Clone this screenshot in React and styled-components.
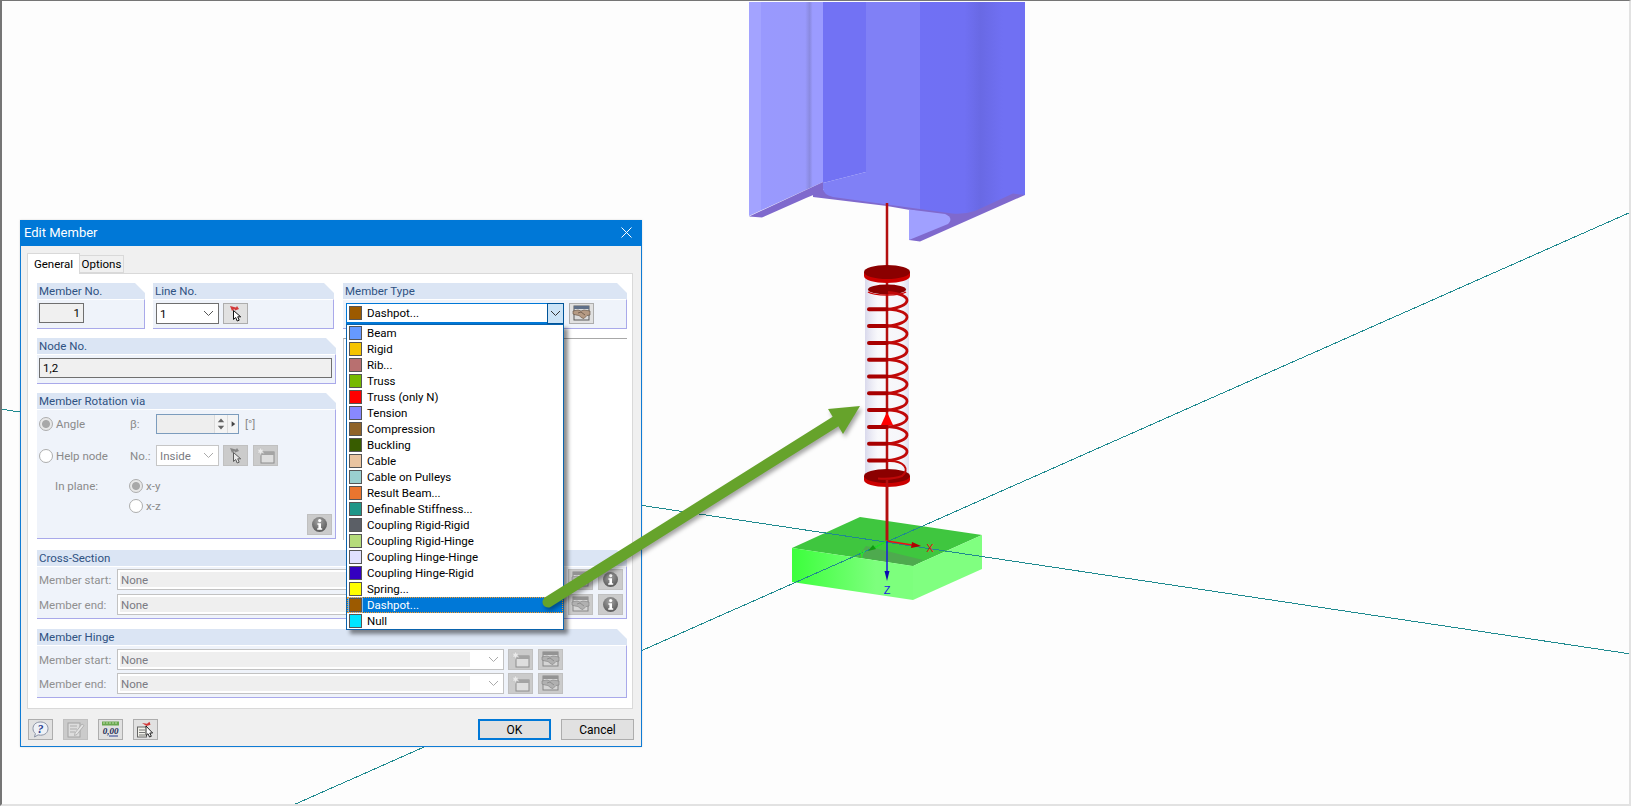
import React from "react";
import styled, { createGlobalStyle } from "styled-components";

const Global = createGlobalStyle`
  html, body { margin: 0; padding: 0; background: #fdfdfd; overflow: hidden; }
  * { box-sizing: border-box; }
`;

const Frame = styled.div`
  position: relative;
  width: 1631px;
  height: 806px;
  overflow: hidden;
  background: #fdfdfd;
  border-top: 1px solid #757575;
  border-left: 2px solid #757575;
  border-right: 2px solid #e2e2e2;
  border-bottom: 2px solid #e2e2e2;
  font-family: Roboto, "Liberation Sans", sans-serif;
  font-size: 11.5px;
  color: #000;
`;

const SceneSvg = styled.svg`
  position: absolute;
  left: -2px;
  top: -1px;
  width: 1631px;
  height: 806px;
`;

const ArrowSvg = styled.svg`
  position: absolute;
  left: -2px;
  top: -1px;
  width: 1631px;
  height: 806px;
  pointer-events: none;
  z-index: 5;
  filter: drop-shadow(2px 3px 2px rgba(0, 0, 0, 0.35));
`;

const Dialog = styled.div`
  position: absolute;
  left: 18px;
  top: 219px;
  width: 622px;
  height: 527px;
  background: #f0f0f0;
  border: 1px solid #0f7bd4;
  border-top: 0;
  display: flex;
  flex-direction: column;
  box-shadow: 0 0 2px rgba(0, 0, 0, 0.15);
`;

const TitleBar = styled.div`
  height: 26px;
  background: #0078d7;
  color: #fff;
  display: flex;
  align-items: center;
  justify-content: space-between;
  padding: 0 10px 2px 4px;
  font-size: 13px;
  margin: 0 -1px;
`;

const Body = styled.div`
  flex: 1;
  padding: 7px 8px 0 6px;
  display: flex;
  flex-direction: column;
`;

const Tabs = styled.div`
  display: flex;
  align-items: flex-end;
  height: 20px;
  position: relative;
  z-index: 1;
`;

const Tab = styled.div`
  height: ${(p) => (p.$active ? "21px" : "18px")};
  width: ${(p) => (p.$active ? "53px" : "44px")};
  background: ${(p) => (p.$active ? "#fff" : "#f0f0f0")};
  border: 1px solid #d9d9d9;
  border-bottom: ${(p) => (p.$active ? "0" : "1px solid #d9d9d9")};
  border-left: ${(p) => (p.$active ? "1px solid #d9d9d9" : "0")};
  margin-bottom: ${(p) => (p.$active ? "-1px" : "0")};
  display: flex;
  align-items: center;
  justify-content: center;
`;

const Panel = styled.div`
  height: 436px;
  background: #fff;
  border: 1px solid #d9d9d9;
  padding: 9px 5px 0 9px;
  display: flex;
  flex-direction: column;
  gap: 10px;
`;

const Columns = styled.div`
  display: flex;
  gap: 7px;
  height: 257px;
`;

const LeftCol = styled.div`
  width: 299px;
  display: flex;
  flex-direction: column;
  gap: 9px;
`;

const RightCol = styled.div`
  width: 284px;
  display: flex;
  flex-direction: column;
  gap: 9px;
`;

const TopRow = styled.div`
  display: flex;
  gap: 8px;
`;

const Group = styled.section`
  width: ${(p) => p.$w || "auto"};
  display: flex;
  flex-direction: column;
`;

const GroupHead = styled.h3`
  margin: 0;
  height: 16px;
  line-height: 17px;
  padding-left: 2px;
  font-size: 11.5px;
  font-weight: 400;
  color: #2f5282;
  background: #dbe5f4;
  clip-path: polygon(0 0, calc(100% - 10px) 0, 100% 10px, 100% 100%, 0 100%);
`;

const GroupBody = styled.div`
  background: #eff3fa;
  border-top: 1px solid #fff;
  border-right: 1px solid #a9a9ea;
  border-bottom: 1px solid #a9a9ea;
  padding: ${(p) => p.$pad || "3px 3px 3px 2px"};
  display: flex;
  flex-direction: column;
  gap: ${(p) => p.$gap || "0"};
`;

const Inline = styled.div`
  display: flex;
  align-items: center;
  gap: ${(p) => p.$gap || "4px"};
`;

const ReadOnly = styled.div`
  width: ${(p) => p.$w};
  height: 20px;
  border: 1px solid #6f6f6f;
  background: #f0f0f0;
  padding: 0 3px;
  line-height: 18px;
  text-align: ${(p) => p.$align || "left"};
`;

const Combo = styled.div`
  position: relative;
  width: ${(p) => p.$w};
  height: 21px;
  background: #fff;
  border: 1px solid ${(p) => p.$line || "#6f6f6f"};
  color: ${(p) => (p.$muted ? "#7a7a82" : "#000")};
  padding-left: 3px;
  display: flex;
  align-items: center;
  justify-content: space-between;
`;

const DisabledFill = styled.div`
  flex: 1;
  align-self: stretch;
  margin: 2px 18px 2px -1px;
  padding-left: 1px;
  background: #efefef;
  display: flex;
  align-items: center;
`;

const Chevron = styled.svg`
  width: 11px;
  height: 7px;
  margin-right: 4px;
  flex: none;
  stroke: ${(p) => p.$c || "#555"};
  fill: none;
  stroke-width: 1;
`;

const IconBtn = styled.button`
  width: 25px;
  height: 21px;
  padding: 0;
  flex: none;
  background: ${(p) => (p.$off ? "#cbcbcb" : "#e1e1e1")};
  border: 1px solid ${(p) => (p.$off ? "#c0c0c0" : "#adadad")};
  display: flex;
  align-items: center;
  justify-content: center;
  svg {
    width: 19px;
    height: 17px;
    ${(p) => (p.$off ? (p.$solid ? "filter: grayscale(1);" : "filter: grayscale(1) opacity(0.6);") : "")}
  }
`;

const TypeCombo = styled.div`
  position: relative;
  width: 218px;
  height: 21px;
  background: #fff;
  border: 1px solid #0078d7;
  border-bottom-width: 2px;
  display: flex;
  align-items: center;
`;

const TypeArrow = styled.div`
  position: absolute;
  right: -1px;
  top: -1px;
  bottom: -2px;
  width: 17px;
  background: #cce4f7;
  border: 1px solid #005499;
  display: flex;
  align-items: center;
  justify-content: center;
  svg {
    margin: 0;
  }
`;

const Swatch = styled.i`
  display: block;
  width: 13px;
  height: 14px;
  flex: none;
  background: ${(p) => p.$color};
  border: 1px solid #555;
  outline: 1px solid rgba(255, 255, 255, 0.5);
`;

const ComboValue = styled.div`
  display: flex;
  align-items: center;
  gap: 5px;
  padding-left: 2px;
`;

const DropList = styled.ul`
  position: absolute;
  left: -1px;
  top: 20px;
  width: 218px;
  margin: 0;
  padding: 0;
  list-style: none;
  background: #fff;
  border: 1px solid #0a63ad;
  box-shadow: 4px 4px 4px rgba(0, 0, 0, 0.45);
  z-index: 3;
`;

const DropItem = styled.li`
  height: 16px;
  display: flex;
  align-items: center;
  gap: 5px;
  padding-left: 2px;
  background: ${(p) => (p.$active ? "#0078d7" : "transparent")};
  color: ${(p) => (p.$active ? "#fff" : "#000")};
  outline: ${(p) => (p.$active ? "1px dotted #ff9a1f" : "0")};
  outline-offset: -1px;
`;

const Preview = styled.div`
  flex: 1;
  border-top: 1px solid #a8a8a8;
  border-left: 1px solid #c8c8c8;
`;

const RotRow = styled.div`
  display: flex;
  align-items: center;
  color: #8a8a8a;
  height: ${(p) => p.$h};
  margin-top: ${(p) => p.$mt || "0"};
  padding-left: ${(p) => p.$pl || "0"};
`;

const RadioLabel = styled.label`
  width: ${(p) => p.$w};
  display: flex;
  align-items: center;
  gap: 3px;
  flex: none;
`;

const RadioDot = styled.span`
  width: 14px;
  height: 14px;
  border-radius: 50%;
  border: 1px solid #adadad;
  background: ${(p) => (p.$on ? "radial-gradient(circle, #a8a8a8 0 3.5px, #e8e8e8 4.5px)" : "#fff")};
  flex: none;
`;

const SmallLabel = styled.span`
  width: ${(p) => p.$w};
  flex: none;
  margin-left: ${(p) => p.$ml || "0"};
`;

const SpinBox = styled.div`
  width: 83px;
  height: 20px;
  background: #eeeeee;
  border: 1px solid #7c9cbd;
  display: flex;
  justify-content: flex-end;
`;

const SpinPart = styled.div`
  width: ${(p) => p.$w};
  background: #f4f4f4;
  border-left: 1px solid #dcdcdc;
  svg {
    display: block;
    width: 100%;
    height: 100%;
  }
`;

const InfoSlot = styled.div`
  display: flex;
  justify-content: flex-end;
`;

const FieldRow = styled.div`
  display: flex;
  align-items: center;
  height: 21px;
  color: #909090;
`;

const FieldLabel = styled.span`
  width: 78px;
  flex: none;
`;

const FieldBtns = styled.div`
  display: flex;
  gap: 5px;
  margin-left: 4px;
`;

const Footer = styled.div`
  flex: 1;
  display: flex;
  justify-content: space-between;
  align-items: flex-start;
  padding: 10px 0 0 1px;
  margin-right: -1px;
`;

const FooterGroup = styled.div`
  display: flex;
  gap: ${(p) => p.$gap};
`;

const TextBtn = styled.button`
  width: 73px;
  height: 21px;
  padding: 0;
  font: inherit;
  font-size: 12px;
  color: #000;
  background: #e1e1e1;
  border: ${(p) => (p.$primary ? "2px solid #0078d7" : "1px solid #adadad")};
`;

const CursorPick = () => (
  <svg viewBox="0 0 19 17">
    <path d="M4 1l6 1.5 1-1.5 2 3-4 1.5-.6-1.4L6 6z" fill="#d23a3a" />
    <path d="M7.5 5.5v9l2.2-2 1.5 3.5 2-.8-1.5-3.4h3z" fill="#fff" stroke="#111" strokeWidth="1" strokeLinejoin="round" />
  </svg>
);

const NewWindow = () => (
  <svg viewBox="0 0 19 17">
    <rect x="5" y="5" width="13" height="11" fill="#ececdc" stroke="#666" />
    <rect x="5" y="5" width="13" height="3" fill="#8c8c7a" />
    <path d="M4.5 0l1 2.6 2.6-.6-1.6 2.2 1.6 2.2-2.6-.6-1 2.6-1-2.6-2.6.6 1.6-2.2L.9 2l2.6.6z" fill="#fff" stroke="#b5b5b5" strokeWidth="0.5" />
  </svg>
);

const HandshakeWindow = () => (
  <svg viewBox="0 0 19 17">
    <rect x="2" y="1" width="15" height="14" fill="#dcdcdc" stroke="#5a5a5a" />
    <rect x="2" y="1" width="15" height="3" fill="#5f6f88" />
    <path d="M1 6l5-1 3 1 3-1 6 1v4l-3 .5-3 3-2-.5-3-2.500-3-.5-3-1z" fill="#b59a83" stroke="#5d4b3c" strokeWidth="0.6" />
    <path d="M6 8l3-1 4 3" fill="none" stroke="#5d4b3c" strokeWidth="0.7" />
  </svg>
);

const InfoCircle = () => (
  <svg viewBox="0 0 19 17">
    <defs>
      <radialGradient id="inf" cx="45%" cy="30%" r="75%">
        <stop offset="0" stopColor="#a5a59c" />
        <stop offset="1" stopColor="#55554f" />
      </radialGradient>
    </defs>
    <circle cx="9.5" cy="8.5" r="7.5" fill="url(#inf)" />
    <circle cx="9.7" cy="4.6" r="1.6" fill="#fff" />
    <path d="M7.4 7.2h3.6v5h1.2v1.6H7.2v-1.6h1.2V8.8h-1z" fill="#fff" />
  </svg>
);

const HelpBubble = () => (
  <svg viewBox="0 0 19 17">
    <path d="M9.5 1C14 1 17 3.7 17 7.6s-3 6.6-7.5 6.6c-.9 0-1.7-.1-2.4-.3L3.5 16l.9-3.5C2.8 11.3 2 9.6 2 7.6 2 3.7 5 1 9.5 1z" fill="#eef1f6" stroke="#8b93a5" />
    <text x="9.5" y="12" fontFamily="Liberation Serif, serif" fontWeight="700" fontStyle="italic" fontSize="12" textAnchor="middle" fill="#2a3f92">?</text>
  </svg>
);

const NoteEdit = () => (
  <svg viewBox="0 0 19 17">
    <rect x="2" y="2" width="12" height="14" fill="#e9e9de" stroke="#888" />
    <path d="M4 5h7M4 8h7M4 11h5" stroke="#999" />
    <path d="M9 12l7-9 2 1.5-7 9-2.5 1z" fill="#f3f3e8" stroke="#888" strokeWidth="0.7" />
  </svg>
);

const CalcZero = () => (
  <svg viewBox="0 0 19 17">
    <rect x="1" y="0.5" width="17" height="4" fill="#6aa84f" />
    <path d="M3 1v2M6 1v2M9 1v2M12 1v2M15 1v2" stroke="#d5ecc5" strokeWidth="0.8" />
    <text x="9.5" y="12.5" fontFamily="Liberation Serif, serif" fontStyle="italic" fontWeight="700" fontSize="9" textAnchor="middle" fill="#1b2a55">0,00</text>
    <path d="M8 15h9" stroke="#2a3f92" />
  </svg>
);

const ListPick = () => (
  <svg viewBox="0 0 19 17">
    <rect x="1.5" y="6" width="9" height="10" fill="#f2f2ea" stroke="#666" />
    <path d="M3 9h6M3 11.5h6M3 14h6" stroke="#777" />
    <path d="M6 2l5 .8 2.5-2 1 3-4 1.2z" fill="#d23a3a" />
    <path d="M10 5v9.5l2-1.8 1.5 3.3 1.8-.7-1.5-3.3h2.8z" fill="#fff" stroke="#111" strokeWidth="0.9" strokeLinejoin="round" />
  </svg>
);

const ChevronDown = ({ c }) => (
  <Chevron viewBox="0 0 11 7" $c={c}>
    <path d="M1 1l4.5 4.5L10 1" />
  </Chevron>
);

const memberTypes = [
  ["Beam", "#6699ff"],
  ["Rigid", "#f5c400"],
  ["Rib...", "#b87070"],
  ["Truss", "#76b900"],
  ["Truss (only N)", "#ff0000"],
  ["Tension", "#8888ff"],
  ["Compression", "#8f6328"],
  ["Buckling", "#385c00"],
  ["Cable", "#e9c4a0"],
  ["Cable on Pulleys", "#9acfcf"],
  ["Result Beam...", "#e9752f"],
  ["Definable Stiffness...", "#1f9688"],
  ["Coupling Rigid-Rigid", "#5b5f66"],
  ["Coupling Rigid-Hinge", "#b5db7a"],
  ["Coupling Hinge-Hinge", "#e0e0ff"],
  ["Coupling Hinge-Rigid", "#3300c0"],
  ["Spring...", "#ffff00"],
  ["Dashpot...", "#9c5a00"],
  ["Null", "#00e5ff"],
];

const coilYs = Array.from({ length: 10 }, (_, i) => 309.3 + i * 16.8);

const Scene = () => (
  <SceneSvg viewBox="0 0 1631 806">
    <defs>
      <linearGradient id="flange" gradientUnits="userSpaceOnUse" x1="749" x2="823" y1="0" y2="0">
        <stop offset="0.16" stopColor="#a3a3ff" />
        <stop offset="0.16" stopColor="#9999fe" />
        <stop offset="0.76" stopColor="#9999fc" />
        <stop offset="0.82" stopColor="#8a8ae0" />
        <stop offset="0.86" stopColor="#9b9bff" />
      </linearGradient>
      <linearGradient id="web" gradientUnits="userSpaceOnUse" x1="866" x2="1025" y1="0" y2="0">
        <stop offset="0.34" stopColor="#8080f6" />
        <stop offset="0.34" stopColor="#7070f5" />
        <stop offset="0.62" stopColor="#7070f3" />
        <stop offset="0.72" stopColor="#6969e4" />
        <stop offset="0.86" stopColor="#7070f3" />
      </linearGradient>
      <linearGradient id="plateFront" gradientUnits="userSpaceOnUse" x1="792" x2="912" y1="0" y2="0">
        <stop offset="0" stopColor="#3cff3c" />
        <stop offset="0.7" stopColor="#7dff7d" />
      </linearGradient>
      <linearGradient id="glass" gradientUnits="userSpaceOnUse" x1="865" x2="909" y1="0" y2="0">
        <stop offset="0" stopColor="#d5d5ea" stopOpacity="0.9" />
        <stop offset="0.3" stopColor="#f6f6fb" stopOpacity="0.6" />
        <stop offset="0.8" stopColor="#f2f2f8" stopOpacity="0.6" />
        <stop offset="1" stopColor="#dcdcee" stopOpacity="0.9" />
      </linearGradient>
    </defs>

    <polygon points="860,517 982,535 913,566 792,548" fill="#3fc63f" />
    <polygon points="866,546 923,560 913,566 858,557" fill="#4eaa4e" />
    <polygon points="792,548 913,566 913,600 792,582" fill="url(#plateFront)" />
    <polygon points="913,566 982,535 982,569 913,600" fill="#80ff80" />

    <path d="M0 409L1631 654" stroke="#1f8a8f" strokeWidth="1" shapeRendering="crispEdges" />
    <path d="M291 806L1631 212" stroke="#1f8a8f" strokeWidth="1" shapeRendering="crispEdges" />

    <path d="M749 2H823V182L749 216z" fill="url(#flange)" />
    <path d="M749 216.5L823 182V191L806 198 762 217.5z" fill="#7f69cd" />
    <path d="M813 190H1025V195L920 241.5 909 240V216L950 217 887 206 813 197z" fill="#7f69cd" />
    <path d="M909 209.5L945 214Q954 218 948 224L909 240z" fill="#a0a0ff" />
    <path d="M866 2H1025V195L1013 193.5 975 211Q965 214.5 952 213.5L833 197Q823 194 823 189V183L866 172z" fill="url(#web)" />
    <path d="M823 2H866V172L823 183z" fill="#7272f4" />

    <rect x="865" y="272" width="44" height="204" fill="url(#glass)" />
    <path d="M887 203V541" stroke="#b40f0f" strokeWidth="2.5" />
    <path d="M864 272v4c0 4 10 7 23 7s23-3 23-7v-4z" fill="#cc0000" />
    <ellipse cx="887" cy="272" rx="23" ry="7" fill="#8b0000" />
    <ellipse cx="887" cy="289.5" rx="19" ry="5" fill="#8b0000" />
    <path d="M868 292c3 2 10 3 19 3s16-1 19-3" fill="none" stroke="#cc0000" strokeWidth="1.5" />
    {coilYs.map((y) => (
      <g key={y}>
        <path d={`M887 ${y}C912 ${y - 2} 915 ${y - 15} 888 ${y - 17}`} fill="none" stroke="#c00808" strokeWidth="2.8" />
        <path d={`M869 ${y}H887`} stroke="#a80000" strokeWidth="4" strokeLinecap="round" />
      </g>
    ))}
    <path d="M864 476v4c0 4 10 7 23 7s23-3 23-7v-4z" fill="#cc0000" />
    <ellipse cx="887" cy="476" rx="23" ry="7" fill="#8b0000" />
    <path d="M887 461C905 460 910 470 902 476 894 479 885 479 878 478.5" fill="none" stroke="#c00808" strokeWidth="2" />
    <polygon points="887,412 893,425 881,425" fill="#ff0000" />
    <path d="M887 480V541" stroke="#b40f0f" strokeWidth="2.5" />

    <path d="M887 541L912 545" stroke="#f01010" strokeWidth="1.5" />
    <polygon points="921,546 912,542 911,548" fill="#b00000" />
    <path d="M887 541L872 549" stroke="#22dd22" strokeWidth="1.5" />
    <polygon points="868,551 873,545 876,549" fill="#119911" />
    <path d="M887 541V572" stroke="#1a1ae0" strokeWidth="1.5" />
    <polygon points="887,581 884.5,571 889.5,571" fill="#0a0ab0" />
    <text x="930" y="552" fontFamily="Liberation Sans, sans-serif" fontSize="11" textAnchor="middle" fill="#e01010">X</text>
    <text x="862" y="558" fontFamily="Liberation Sans, sans-serif" fontSize="11" textAnchor="middle" fill="#22ee22">Y</text>
    <text x="887" y="594" fontFamily="Liberation Sans, sans-serif" fontSize="11" textAnchor="middle" fill="#1a1ae0">Z</text>
  </SceneSvg>
);

const Arrow = () => (
  <ArrowSvg viewBox="0 0 1631 806">
    <path d="M548 602L838 420" stroke="#66a32b" strokeWidth="11" strokeLinecap="round" />
    <polygon points="828,409 860,406 843,434" fill="#66a32b" />
  </ArrowSvg>
);

const HingeRow = ({ label, extra }) => (
  <FieldRow>
    <FieldLabel>{label}</FieldLabel>
    <Combo $w="387px" $muted $line="#c2c2c2">
      <DisabledFill>None</DisabledFill>
      <ChevronDown c="#aaa" />
    </Combo>
    <FieldBtns>
      <IconBtn $off><NewWindow /></IconBtn>
      <IconBtn $off><HandshakeWindow /></IconBtn>
      {extra}
    </FieldBtns>
  </FieldRow>
);

const crossExtra = (
  <>
    <IconBtn $off><HandshakeWindow /></IconBtn>
    <IconBtn $off $solid><InfoCircle /></IconBtn>
  </>
);

export default function App() {
  return (
    <Frame>
      <Global />
      <Scene />
      <Dialog>
        <TitleBar>
          <span>Edit Member</span>
          <svg width="11" height="11" viewBox="0 0 11 11" stroke="#fff" strokeWidth="1">
            <path d="M.5.5l10 10M10.5.5l-10 10" />
          </svg>
        </TitleBar>
        <Body>
          <Tabs>
            <Tab $active>General</Tab>
            <Tab>Options</Tab>
          </Tabs>
          <Panel>
            <Columns>
              <LeftCol>
                <TopRow>
                  <Group $w="108px">
                    <GroupHead>Member No.</GroupHead>
                    <GroupBody $pad="3px 3px 5px 2px">
                      <ReadOnly $w="45px" $align="right">1</ReadOnly>
                    </GroupBody>
                  </Group>
                  <Group $w="181px">
                    <GroupHead>Line No.</GroupHead>
                    <GroupBody $pad="3px 3px 4px 3px">
                      <Inline>
                        <Combo $w="63px">
                          1
                          <ChevronDown />
                        </Combo>
                        <IconBtn><CursorPick /></IconBtn>
                      </Inline>
                    </GroupBody>
                  </Group>
                </TopRow>
                <Group>
                  <GroupHead>Node No.</GroupHead>
                  <GroupBody $pad="3px 3px 5px 2px">
                    <ReadOnly $w="293px">1,2</ReadOnly>
                  </GroupBody>
                </Group>
                <Group>
                  <GroupHead>Member Rotation via</GroupHead>
                  <GroupBody $pad="4px 3px 3px 2px">
                    <RotRow $h="20px">
                      <RadioLabel $w="91px"><RadioDot $on />Angle</RadioLabel>
                      <SmallLabel $w="26px">β:</SmallLabel>
                      <SpinBox>
                        <SpinPart $w="13px">
                          <svg viewBox="0 0 13 18">
                            <path d="M3 7l3.5-4L10 7zM3 11l3.5 4L10 11z" fill="#666" />
                          </svg>
                        </SpinPart>
                        <SpinPart $w="11px">
                          <svg viewBox="0 0 11 18">
                            <path d="M4 6l4 3-4 3z" fill="#444" />
                          </svg>
                        </SpinPart>
                      </SpinBox>
                      <SmallLabel $w="20px" $ml="6px">[°]</SmallLabel>
                    </RotRow>
                    <RotRow $h="21px" $mt="11px">
                      <RadioLabel $w="91px"><RadioDot />Help node</RadioLabel>
                      <SmallLabel $w="26px">No.:</SmallLabel>
                      <Combo $w="63px" $muted $line="#c6c6c6">
                        Inside
                        <ChevronDown c="#aaa" />
                      </Combo>
                      <FieldBtns>
                        <IconBtn $off><CursorPick /></IconBtn>
                        <IconBtn $off><NewWindow /></IconBtn>
                      </FieldBtns>
                    </RotRow>
                    <RotRow $h="16px" $mt="12px" $pl="16px">
                      <SmallLabel $w="74px">In plane:</SmallLabel>
                      <RadioLabel $w="60px"><RadioDot $on />x-y</RadioLabel>
                    </RotRow>
                    <RotRow $h="16px" $mt="4px" $pl="90px">
                      <RadioLabel $w="60px"><RadioDot />x-z</RadioLabel>
                    </RotRow>
                    <InfoSlot>
                      <IconBtn $off $solid><InfoCircle /></IconBtn>
                    </InfoSlot>
                  </GroupBody>
                </Group>
              </LeftCol>
              <RightCol>
                <Group>
                  <GroupHead>Member Type</GroupHead>
                  <GroupBody $pad="3px 3px 4px 3px">
                    <Inline $gap="5px">
                      <TypeCombo>
                        <ComboValue>
                          <Swatch $color="#9c5a00" />
                          Dashpot...
                        </ComboValue>
                        <TypeArrow><ChevronDown c="#333" /></TypeArrow>
                        <DropList>
                          {memberTypes.map(([name, color]) => (
                            <DropItem key={name} $active={name === "Dashpot..."}>
                              <Swatch $color={color} />
                              {name}
                            </DropItem>
                          ))}
                        </DropList>
                      </TypeCombo>
                      <IconBtn><HandshakeWindow /></IconBtn>
                    </Inline>
                  </GroupBody>
                </Group>
                <Preview />
              </RightCol>
            </Columns>
            <Group>
              <GroupHead>Cross-Section</GroupHead>
              <GroupBody $pad="2px 3px 3px 2px" $gap="4px">
                <HingeRow label="Member start:" extra={crossExtra} />
                <HingeRow label="Member end:" extra={crossExtra} />
              </GroupBody>
            </Group>
            <Group>
              <GroupHead>Member Hinge</GroupHead>
              <GroupBody $pad="3px 3px 3px 2px" $gap="3px">
                <HingeRow label="Member start:" />
                <HingeRow label="Member end:" />
              </GroupBody>
            </Group>
          </Panel>
          <Footer>
            <FooterGroup $gap="10px">
              <IconBtn><HelpBubble /></IconBtn>
              <IconBtn $off><NoteEdit /></IconBtn>
              <IconBtn><CalcZero /></IconBtn>
              <IconBtn><ListPick /></IconBtn>
            </FooterGroup>
            <FooterGroup $gap="10px">
              <TextBtn $primary>OK</TextBtn>
              <TextBtn>Cancel</TextBtn>
            </FooterGroup>
          </Footer>
        </Body>
      </Dialog>
      <Arrow />
    </Frame>
  );
}
